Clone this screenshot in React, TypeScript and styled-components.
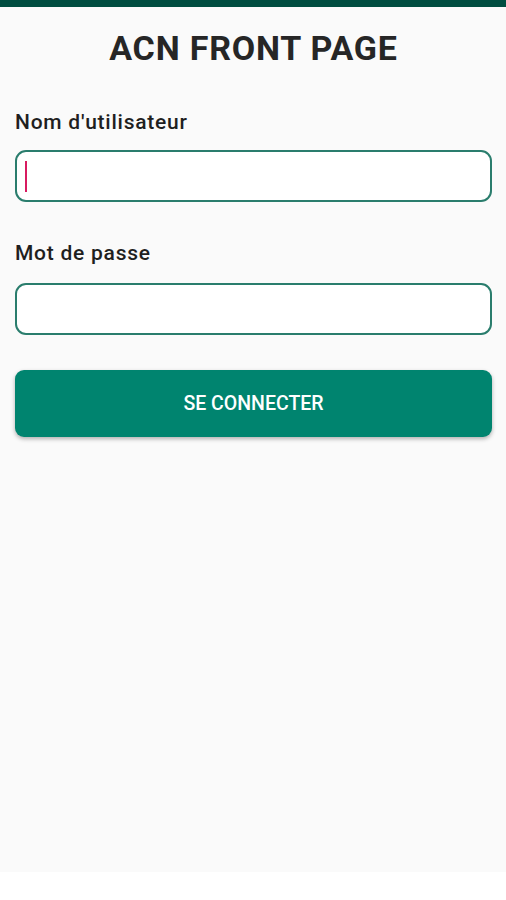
import styled, { createGlobalStyle } from "styled-components";

const GlobalStyle = createGlobalStyle`
  html, body {
    margin: 0;
    padding: 0;
    background: #ffffff;
    font-family: Roboto, "Noto Sans", sans-serif;
  }
`;

const Screen = styled.div`
  width: 506px;
  height: 900px;
  display: flex;
  flex-direction: column;
  background: #ffffff;
`;

const StatusBar = styled.div`
  height: 7px;
  background: #004d40;
  flex-shrink: 0;
`;

const Content = styled.div`
  height: 865px;
  background: #fafafa;
  padding: 0 14px 0 15px;
  box-sizing: border-box;
  display: flex;
  flex-direction: column;
`;

const Title = styled.h1`
  margin: 21px 0 0;
  text-align: center;
  font-size: 34px;
  line-height: 40px;
  font-weight: 700;
  letter-spacing: 0.8px;
  color: #262626;
`;

const Label = styled.label<{ $top: number }>`
  display: block;
  margin-top: ${(p) => p.$top}px;
  font-size: 21px;
  line-height: 24px;
  font-weight: 500;
  letter-spacing: 0.75px;
  color: #1f1f1f;
`;

const Field = styled.div<{ $top: number }>`
  position: relative;
  margin-top: ${(p) => p.$top}px;
  height: 52px;
  border: 2px solid #2a7d6d;
  border-radius: 11px;
  background: #ffffff;
  box-sizing: border-box;
`;

const Caret = styled.span`
  position: absolute;
  left: 8px;
  top: 9px;
  width: 2px;
  height: 31px;
  background: #d81b60;
`;

const Button = styled.button`
  margin-top: 35px;
  height: 67px;
  border: 0;
  border-radius: 9px;
  background: #00846f;
  color: #ffffff;
  font-family: Roboto, "Noto Sans", sans-serif;
  font-size: 19.5px;
  font-weight: 500;
  box-shadow: 0 2px 4px rgba(0, 0, 0, 0.3);
  cursor: pointer;
`;

export default function App() {
  return (
    <>
      <GlobalStyle />
      <Screen>
        <StatusBar />
        <Content>
          <Title>ACN FRONT PAGE</Title>
          <Label $top={42}>Nom d'utilisateur</Label>
          <Field $top={16}>
            <Caret />
          </Field>
          <Label $top={39}>Mot de passe</Label>
          <Field $top={18} />
          <Button>SE CONNECTER</Button>
        </Content>
      </Screen>
    </>
  );
}
